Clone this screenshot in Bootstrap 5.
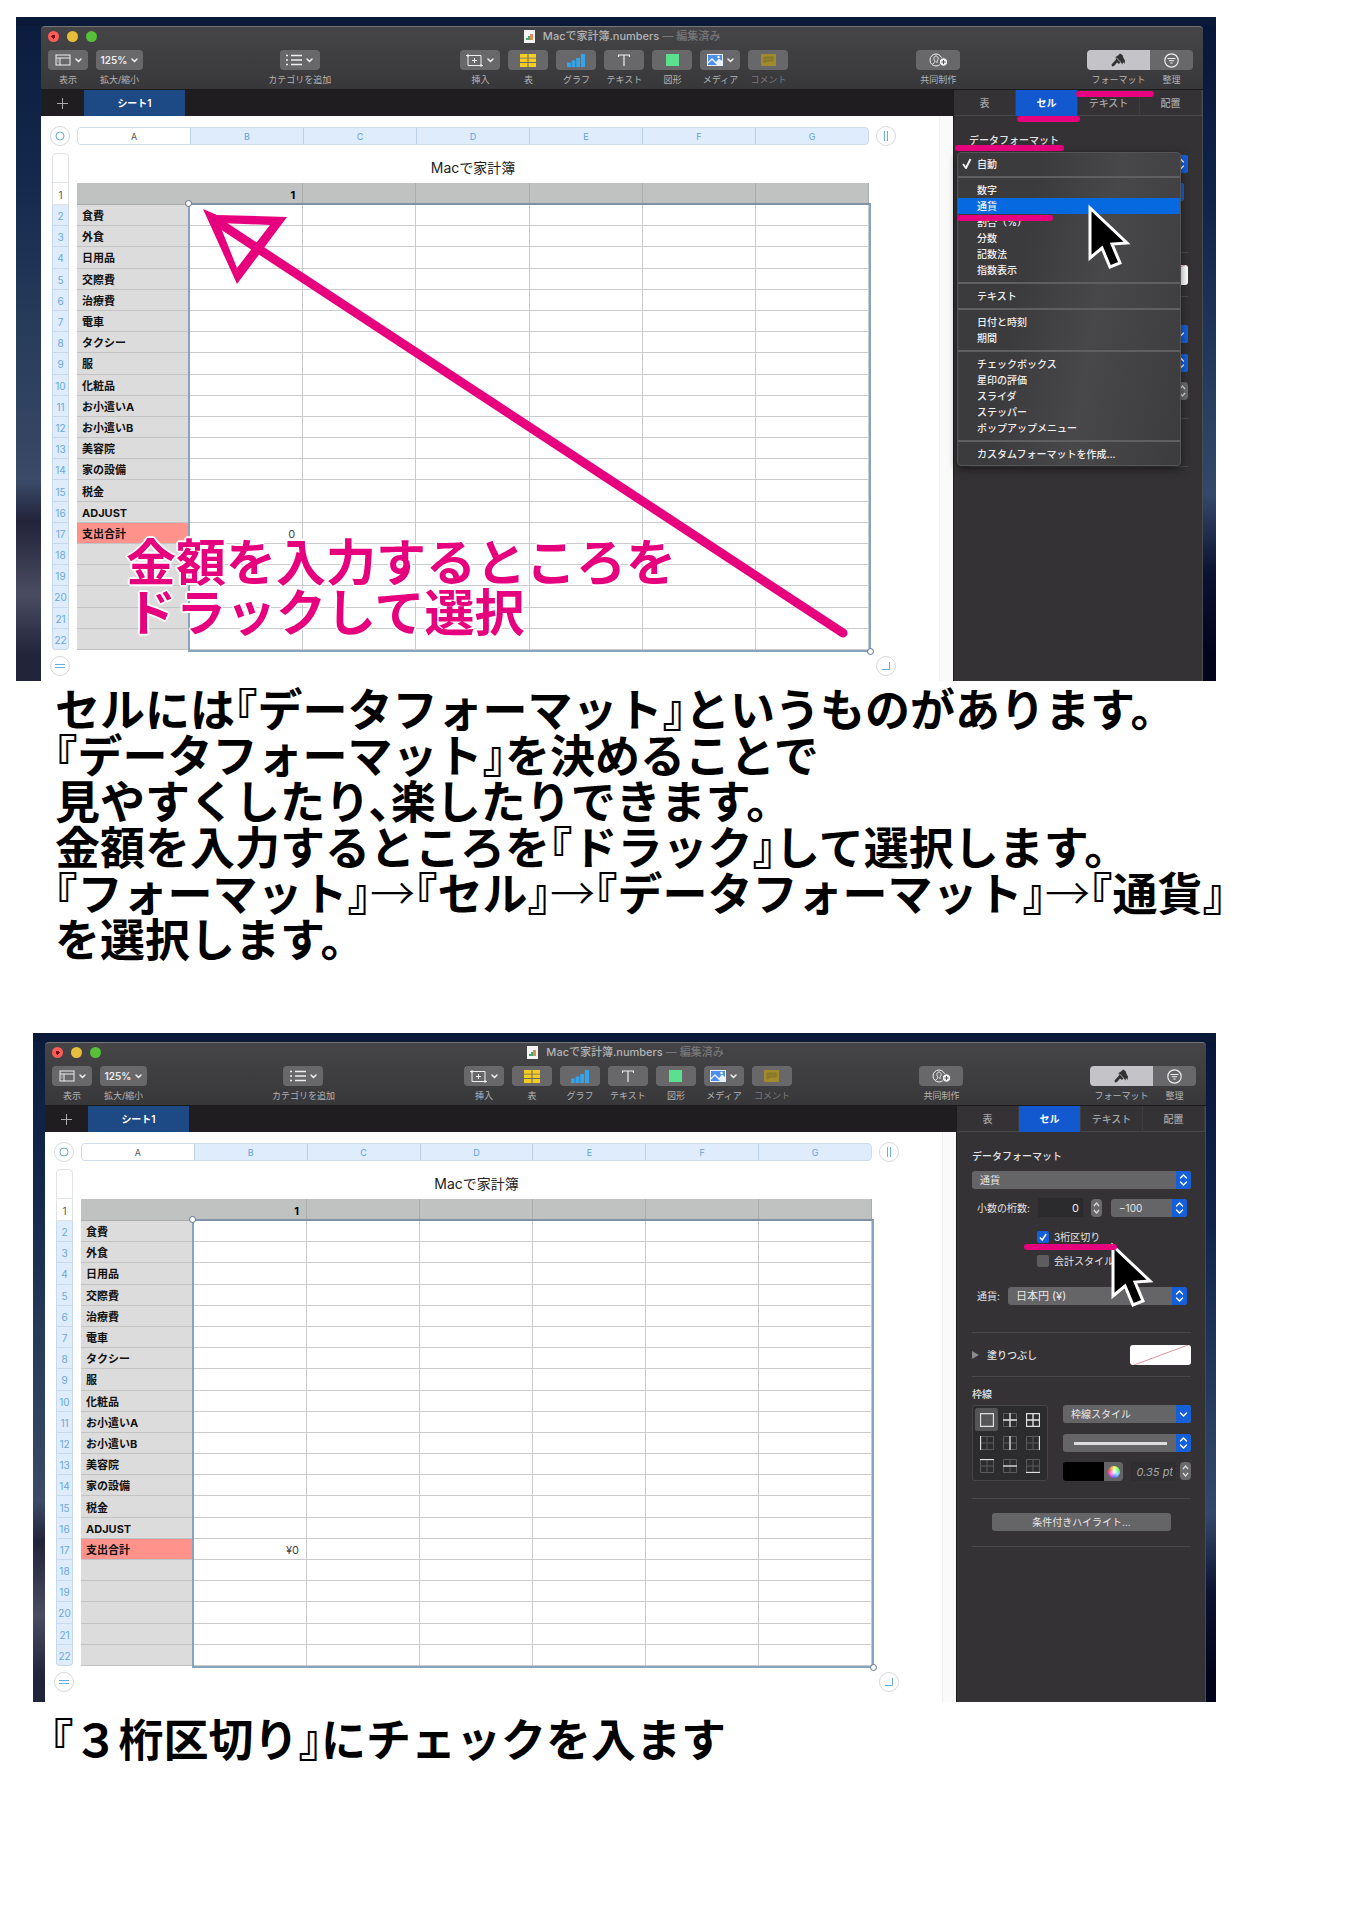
<!DOCTYPE html>
<html lang="ja">
<head>
<meta charset="utf-8">
<meta name="viewport" content="width=device-width, initial-scale=1">
<title>Macで家計簿</title>
<link href="https://cdn.jsdelivr.net/npm/bootstrap@5.3.0/dist/css/bootstrap.min.css" rel="stylesheet">
<style>
:root{--pink:#e6007e;--ui:Inter,"Noto Sans CJK JP",sans-serif}
body{font-family:var(--ui);background:#fff;color:#000}
.sheet-page{max-width:1216px;padding-top:17px}
svg{display:block}
/* desktop wallpaper round each window */
.shot{position:relative;margin-left:16px;padding:9px 13px 0 25px;
  background:
   linear-gradient(#0a1938,#0a1938) top/100% 9px no-repeat,
   linear-gradient(#0b1c3e 0%,#14294c 25%,#263a5a 45%,#3a4a68 70%,#22233a 76%,#4a4c62 87%,#22243c 96%) left/50% 100% no-repeat,
   linear-gradient(#071638 0%,#10244a 28%,#2b4263 62%,#33486a 72%,#0b1130 84%,#02041c 96%) right/50% 100% no-repeat}
.shot-second{margin-left:33px;margin-top:72px;padding:9px 10px 0 12px}
.mac{position:relative}
.chrome-top{height:64px;background:linear-gradient(#454547,#38383a);border-top:1px solid #77777a;border-bottom:1px solid #1b1b1c;border-radius:4px 4px 0 0}
.titlebar{position:relative;height:19px;font-size:11px;line-height:19px;font-weight:500;color:#b4b4b6}
.lights{position:absolute;left:7px;top:4px;gap:8px}
.lights button{width:11px;height:11px;border:0;border-radius:50%;padding:0}
.lt-r{background:radial-gradient(circle,#7a0d0d 0 2px,#fc5b57 2px)}
.lt-y{background:#e5bf3c}.lt-g{background:#57c038}
.dim{color:#77777a}
.tools{padding:4px 10px 0 7px}
.tool{width:40px;flex:none}
.tool-w{width:47px}.tool-c{width:44px}.tool-f{width:63px}.tool-s{width:43px}
.tool button{width:100%;height:20px;border:0;border-radius:4px;background:#68686b;color:#eee;padding:0;gap:4px;font-size:10px;font-weight:600;line-height:20px}
.tool-f button{border-radius:4px 0 0 4px;background:#c3c3c8;color:#333}
.tool-s button{border-radius:0 4px 4px 0}
.tool span{font-size:9px;line-height:19px;white-space:nowrap;color:#b2b2b4}
.tool .dim{color:#77777a}
.sp1{flex:137}.sp2{flex:141}.sp3{flex:128}.sp4{flex:127}
.workrow{background:#fff}
.sheetbar{height:26px;background:#1f1d20}
.sheetbar button{border:0;background:none;color:#aaa;padding:0;width:43px;font-size:10px;font-weight:600;line-height:26px}
.sheetbar .tab-on{width:101px;background:#1d4985;color:#fff}
.canvas-area{padding:10px 57px 5px 9px;background:linear-gradient(#f0f0f1,#f0f0f1) right 13px top 0/1px 100% no-repeat,linear-gradient(#fafafa,#fafafa) right/14px 100% no-repeat #fff}
.shot-second .canvas-area{padding-bottom:10px}
.knob{width:20px;height:20px;border:1px solid #d5d9dc;border-radius:50%;background:#fff;padding:0;color:#67aee0;flex:none}
.letters{height:18px;margin:0 7px;border:1px solid #cfdcea;border-radius:4px;background:#dfecfc;overflow:hidden;font-size:9px;line-height:17px;color:#5ea2dc;text-align:center}
.letters div{flex:1;border-right:1px solid #bccfe4}
.letters div:first-child{background:#fff;color:#555}
.letters div:last-child{border-right:0}
.gridwrap{position:relative;margin:7px 27px 0 2px}
.grid-tbl{width:100%;height:497px;table-layout:fixed;border-collapse:separate;border-spacing:0;font-size:11px;line-height:14px}
.grid-tbl th,.grid-tbl td{padding:2px 5px 0;white-space:nowrap;vertical-align:middle}
.grid-tbl td{padding-right:7px;border-right:1px solid #c9cbcd;border-bottom:1px solid #c9cbcd;text-align:right;color:#444}
.grid-tbl .cap{height:30px;padding:0;border:0;font-size:14px;font-weight:400;text-align:center;color:#222}
.grid-tbl .hd{height:22px}
.grid-tbl .no{padding:2px 0 0;text-align:center;font-size:10px;font-weight:400;color:#6aa9dd;background:#dfecfc;border:1px solid #c8d9ec;border-top:0}
.grid-tbl .no0{background:#fff;border:1px solid #dfe3e6;border-radius:4px 4px 0 0}
.grid-tbl .no1{background:#fff;color:#555;border-color:#dfe3e6}
.grid-tbl tr:last-child .no{border-radius:0 0 4px 4px}
.grid-tbl .hd td,.grid-tbl .hd .name{background:#c0c1c1;border-color:#a9abac;color:#000;font-weight:700}
.grid-tbl .name{background:#dcdcdc;border-bottom:1px solid #c3c3c3;text-align:left;font-weight:700;color:#111}
.grid-tbl .sum .name{background:#ff938b}
.range{position:absolute;left:calc(25px + (100% - 25px)/7 - 2px);top:50px;right:-2px;bottom:-2px;border:2px solid #86a4bd;border-top-color:#8090a8;pointer-events:none}
.range i{position:absolute;width:7px;height:7px;border:1px solid #5d7591;border-radius:50%;background:#fff}
.range i:first-child{left:-5px;top:-5px}.range i:last-child{right:-5px;bottom:-5px}
.foot{padding-top:6px}
/* inspector */
.insp{position:relative;width:250px;flex:none;background:#343234;border-left:1px solid #1c1b1d;border-right:1px solid #4b4b4e;color:#e4e4e6;font-size:10px;line-height:16px}
.insp button,.insp input,.insp select{font-size:10px;color:#e8e8ea;border:0;padding:0}
.insp-tabs{height:26px;border-bottom:1px solid #48474a}
.insp-tabs button{flex:1;background:none;color:#a2a2a4;border-right:1px solid #3e3d40;font-weight:500}
.insp-tabs .on{background:#1259d0;color:#fff;font-weight:700;margin-bottom:-1px}
.insp-body{padding:16px 14px 0 15px}
.strong{font-weight:500}
.pop{position:relative;height:18px;display:block}
.pop select,.pop .linebtn{appearance:none;display:block;width:100%;height:18px;border-radius:3px;background:#656466;padding-left:8px;line-height:18px}
.pop svg{position:absolute;right:0;top:0;pointer-events:none}
.dec{height:19px;margin-top:9px;padding:0 4px 0 5px}
.dec input{width:45px;height:19px;background:#2b2a2c;text-align:right;padding-right:4px;font-size:11px;margin-left:auto}
.dec .pop{width:76px}
.stepper{display:block;width:11px;height:18px;border-radius:4px;background:#6b6a6c;flex:none}
.step-gap{margin:0 9px 0 8px}
.checks{padding:14px 0 0 65px}
.checks div{position:relative;height:12px;margin-bottom:12px}
.checks input{appearance:none;width:12px;height:12px;border-radius:2px;background:#5d5c5e;margin:0 5px 0 0;flex:none}
.checks input:checked{background:#1560d8}
.checks svg{position:absolute;left:0;top:0;pointer-events:none}
.cur{padding:8px 4px 0 5px}
.cur .pop{width:179px}.cur .pop select{font-size:11px}
.rule{height:1px;background:#48474a}
.r1{margin-top:51px}.shot-second .r1{margin-top:27px}
.fillrow{height:43px}
.swatch{width:61px;height:20px;border-radius:3px;background:#fff!important;overflow:hidden}
.bgrid{width:76px;height:76px;border:1px solid #464548;border-radius:3px;background:#2c2b2d;display:grid;grid-template-columns:repeat(3,1fr);padding:2px}
.bgrid button{background:none;display:grid;place-items:center;border-radius:2px}
.bgrid button:first-child{background:#555457}
.bcol{width:128px}
.linebtn{position:relative}
.linebtn:after{content:"";position:absolute;left:11px;right:24px;top:8px;height:3px;background:#dcdcdc}
.well{width:60px;height:19px;border-radius:3px;overflow:hidden;background:#000!important}
.well span{width:19px;height:19px;background:#656466}
.well b{width:12px;height:12px;border-radius:50%;background:radial-gradient(circle,#fff 0,transparent 60%),conic-gradient(#ff6,#6f6,#6cf,#66f,#f4c,#f54,#ff6)}
.bcol input{width:45px;height:19px;background:#2f2e30;color:#a4a4a6;font-style:italic;font-size:11px;text-align:right;padding-right:3px}
.hl{width:179px;height:18px;border-radius:3px;background:#656466!important;margin:14px auto 15px 20px;display:block}
/* format menu */
.fmt-menu{position:absolute;left:3px;top:62px;width:224px;padding:3px 0;margin:0;background:linear-gradient(100deg,#3b3a3d 30%,#48474a 60%,#3c3b3e);border:1px solid #555457;border-radius:4px;box-shadow:0 3px 8px #0008;list-style:none;height:314px}
.fmt-menu button{display:block;width:100%;height:16px;line-height:16px;text-align:left;background:none;padding-left:19px;font-weight:500;color:#f0f0f0;position:relative}
.fmt-menu .pick{background:#0669df}
.fmt-menu hr{margin:4px 0;border:0;height:2px;background:#5f5e61;opacity:1}
.fmt-menu svg{position:absolute;left:4px;top:2px}
.marks{position:absolute;left:0;top:0;width:100%;height:100%;pointer-events:none}
.callout{position:absolute;left:110px;top:521px;margin:0;font-size:50px;line-height:50px;font-weight:700;color:var(--pink);white-space:nowrap;pointer-events:none;
 text-shadow:2px 0 #fff,-2px 0 #fff,0 2px #fff,0 -2px #fff,1px 1px #fff,-1px 1px #fff,1px -1px #fff,-1px -1px #fff}
.explain{font-family:"Noto Sans CJK JP",sans-serif;font-size:45px;line-height:46px;font-weight:700;font-feature-settings:"halt";white-space:nowrap;margin:4px 0 0 55px}
.explain-2{margin:13px 0 0 51px}
.explain span{font-weight:300}
</style>
</head>
<body>
<main class="sheet-page">
  <section class="shot" id="shotA"></section>
  <p class="explain">セルには『データフォーマット』というものがあります。<br>『データフォーマット』を決めることで<br>見やすくしたり、楽したりできます。<br>金額を入力するところを『ドラック』して選択します。<br>『フォーマット』<span>→</span>『セル』<span>→</span>『データフォーマット』<span>→</span>『通貨』<br>を選択します。</p>
  <section class="shot shot-second" id="shotB"></section>
  <p class="explain explain-2">『３桁区切り』にチェックを入ます</p>
</main>
<script>
const svg=(w,h,body)=>`<svg width="${w}" height="${h}" viewBox="0 0 ${w} ${h}" fill="none" stroke="currentColor" aria-hidden="true">${body}</svg>`;
const chev=svg(7,5,'<path d="M1 1l2.500 2.500L6 1" stroke-width="1.500" stroke-linecap="round"/>');
const I={
 view:svg(16,12,'<rect x="1" y="1" width="14" height="10"/><path d="M1 4h14M5 4v7M2.500 6h1M2.500 8h1"/>')+chev,
 zoom:'125%'+chev,
 cat:svg(16,12,'<path d="M5 1.500h11M5 6h11M5 10.500h11M0 1.500h2M0 6h2M0 10.500h2" stroke-width="1.500"/>')+chev,
 insert:svg(17,13,'<path d="M2 1.500h13v10H2zM8.500 4v5M6 6.500h5"/><path d="M0 1.500h4M2 0v3M13 11.500h4M15 10v3"/>')+chev,
 table:svg(16,13,'<path fill="#f3cd22" stroke="none" d="M0 0h7.500v3.700H0zM8.500 0H16v3.700H8.500zM0 4.500h7.500v3.500H0zM8.500 4.500H16v3.500H8.500zM0 9h7.500v4H0zM8.500 9H16v4H8.500z"/>'),
 chart:svg(18,13,'<path fill="#35a3ea" stroke="none" d="M0 8.500h3.800V13H0zM4.600 6.500h3.800V13H4.600zM9.200 4H13v9H9.200zM13.800 0H18v13h-4.200z"/>'),
 text:svg(12,12,'<path d="M.5 3V1h11v2M6 1v11" stroke-width="1.200"/>'),
 shape:svg(13,12,'<rect width="13" height="12" fill="#5de08d" stroke="none"/>'),
 media:svg(16,12,'<rect width="16" height="12" fill="#e9f1fb" stroke="none"/><path fill="#4d8fe8" stroke="none" d="M1 1h14v6l-3-2.500L9 8 5 4 1 8zM1 9.500L5 6l5 5H1z"/><circle cx="11.500" cy="3" r="1.200" fill="#fff" stroke="none"/>')+chev,
 comment:svg(15,12,'<path fill="#a08a2b" stroke="none" d="M0 0h15v12H0z"/><path stroke="#85742a" d="M3 3h9v4H6L3 9z" fill="#8d7a2a"/>'),
 share:svg(19,14,'<circle cx="7" cy="7" r="6"/><path d="M4 11c1-2 2-1 2-3-2-2-1-5 1-5s3 3 1 5v2"/><circle cx="14.500" cy="9" r="4.200" fill="#eee" stroke="#68686b"/><path d="M14.500 7v4M12.500 9h4" stroke="#555"/>'),
 brush:svg(15,14,'<path fill="currentColor" stroke="none" d="M.5 11.500L5 6.500 4.500 4 7 2.500 9 .5l2.500 1.500 1 3 1.500 2.500-.5 3.500-1.500-2-.5 2.500L9.500 9 8 11 6 9.500 3 13l-2 .5z"/><path stroke="#c3c3c8" stroke-width=".8" d="M5 4.500L9.500 9"/>'),
 sort:svg(15,15,'<circle cx="7.500" cy="7.500" r="6.700" stroke-width="1.200"/><path d="M3.500 5.500h8M4.800 7.700h5.400M6.300 10h2.400"/>')
};
const tool=(icon,label,cls='',dim='')=>`<div class="tool ${cls} d-flex flex-column align-items-center"><button class="d-flex align-items-center justify-content-center" aria-label="${label}">${I[icon]}</button><span class="${dim}">${label}</span></div>`;
const blue=(single)=>svg(15,18,`<path d="M0 0h12a3 3 0 0 1 3 3v12a3 3 0 0 1-3 3H0z" fill="#1560d8" stroke="none"/><path stroke="#fff" stroke-width="1.300" stroke-linecap="round" d="${single?'M4.500 8l3 3 3-3':'M4.500 7l3-3 3 3M4.500 11l3 3 3-3'}"/>`);
const pop=(text,label,single)=>`<span class="pop"><select aria-label="${label}"><option>${text}</option></select>${blue(single)}</span>`;
const stepper=`<button class="stepper" aria-label="増減">${svg(11,18,'<path stroke="#ddd" d="M3 7l2.500-3L8 7M3 11l2.500 3L8 11" stroke-width="1.200"/>')}</button>`;
const rows=['','食費','外食','日用品','交際費','治療費','電車','タクシー','服','化粧品','お小遣いA','お小遣いB','美容院','家の設備','税金','ADJUST','支出合計','','','','',''];
const knob=(p,l)=>`<button class="knob d-flex align-items-center justify-content-center" aria-label="${l}">${svg(10,10,p)}</button>`;
const bIcons=['M.5 .5h13v13H.5z','M7 0v14M0 7h14','M.5 .5h13v13H.5zM7 0v14M0 7h14','M.5 0v14','M7 0v14','M13.500 0v14','M0 .5h14','M0 7h14','M0 13.500h14'];

function table(total){
  const body=rows.map((name,i)=>{
    let cells='';
    for(let c=0;c<6;c++) cells+=`<td>${c==0&&i==0?'1':c==0&&i==16?total:''}</td>`;
    return `<tr class="${i==0?'hd':i==16?'sum':''}"><th class="no ${i==0?'no1':''}">${i+1}</th><th></th><th class="name">${name}</th>${cells}</tr>`;
  }).join('');
  return `<table class="grid-tbl"><colgroup><col style="width:17px"><col style="width:8px"><col span="7"></colgroup><tbody><tr><th class="no0"></th><th></th><th class="cap" colspan="7">Macで家計簿</th></tr>${body}</tbody></table>`;
}
function inspector(full){
  const id=full?'b':'a';
  return `<aside class="insp"><div class="insp-tabs d-flex"><button>表</button><button class="on">セル</button><button>テキスト</button><button>配置</button></div>
  <div class="insp-body"><div class="strong">データフォーマット</div><div style="height:7px"></div>${pop(full?'通貨':'自動','データフォーマット')}
  <div class="dec d-flex align-items-center"><label for="dec-${id}">小数の桁数:</label><input id="dec-${id}" value="0"><span class="step-gap">${stepper}</span>${pop('−100','負の数')}</div>
  ${full?`<div class="checks"><div class="d-flex align-items-center"><input type="checkbox" id="sep" checked>${svg(12,12,'<path stroke="#fff" stroke-width="1.500" d="M3 6.500l2.200 2.500L9.200 3"/>')}<label for="sep">3桁区切り</label></div><div class="d-flex align-items-center"><input type="checkbox" id="acct"><label for="acct">会計スタイル</label></div></div>
  <div class="cur d-flex align-items-center justify-content-between"><span>通貨:</span>${pop('日本円 (¥)','通貨')}</div>`:''}
  <div class="rule r1"></div>
  <div class="fillrow d-flex align-items-center"><span class="me-2">${svg(7,8,'<path d="M0 0l7 4-7 4z" fill="#8b8a8c" stroke="none"/>')}</span><span class="strong">塗りつぶし</span><button class="swatch ms-auto" aria-label="塗りつぶし">${svg(61,20,'<path stroke="#d9939b" d="M4 20L58 0"/>')}</button></div>
  <div class="rule"></div><div class="strong" style="margin:9px 0 3px">枠線</div>
  <div class="d-flex justify-content-between"><div class="bgrid">${bIcons.map((d,i)=>`<button aria-label="枠線 ${i+1}">${svg(14,14,`<path stroke="#5b5a5c" d="M.5 .5h13v13H.5zM7 0v14M0 7h14"/><path stroke="#e0e0e0" stroke-width="1.300" d="${d}"/>`)}</button>`).join('')}</div>
   <div class="bcol d-flex flex-column justify-content-between">${pop('枠線スタイル','枠線スタイル',1)}<span class="pop"><button class="linebtn" aria-label="線種"></button>${blue()}</span>
   <div class="d-flex align-items-center justify-content-between"><button class="well d-flex justify-content-end" aria-label="線の色"><span class="d-flex align-items-center justify-content-center"><b></b></span></button><div class="d-flex"><input class="me-1" aria-label="線の太さ" value="0.35 pt">${stepper}</div></div></div></div>
  <div class="rule" style="margin-top:17px"></div><button class="hl">条件付きハイライト...</button><div class="rule"></div></div>${full?'':menu()}</aside>`;
}
function menu(){
  const groups=[['自動'],['数字','通貨','割合（%）','分数','記数法','指数表示'],['テキスト'],['日付と時刻','期間'],['チェックボックス','星印の評価','スライダ','ステッパー','ポップアップメニュー'],['カスタムフォーマットを作成...']];
  const tick=svg(10,11,'<path d="M1 6l3 4L8.500 1" stroke-width="2"/>');
  return `<ul class="fmt-menu">${groups.map(g=>g.map(t=>`<li><button class="${t=='通貨'?'pick':''}">${t=='自動'?tick:''}${t}</button></li>`).join('')).join('<li><hr></li>')}</ul>`;
}
function mac(total,full){
  return `<div class="mac"><header class="chrome-top"><div class="titlebar d-flex justify-content-center align-items-center">
   <div class="lights d-flex"><button class="lt-r" aria-label="閉じる"></button><button class="lt-y" aria-label="しまう"></button><button class="lt-g" aria-label="拡大"></button></div>
   ${svg(11,13,'<path fill="#f4f4f4" stroke="none" d="M0 0h11v13H0z"/><path fill="#3fae6a" stroke="none" d="M2 8h2v2H2zM4 6h2v4H4z"/><path fill="#e08d5a" stroke="none" d="M6 4h3v6H6z"/>')}<span class="ms-2">Macで家計簿.numbers <span class="dim">— 編集済み</span></span></div>
  <div class="tools d-flex">${tool('view','表示')}<div class="me-2"></div>${tool('zoom','拡大/縮小','tool-w')}<div class="sp1"></div>${tool('cat','カテゴリを追加')}<div class="sp2"></div>
  <div class="d-flex gap-2">${tool('insert','挿入')}${tool('table','表')}${tool('chart','グラフ')}${tool('text','テキスト')}${tool('shape','図形')}${tool('media','メディア')}${tool('comment','コメント','','dim')}</div>
  <div class="sp3"></div>${tool('share','共同制作','tool-c')}<div class="sp4"></div>${tool('brush','フォーマット','tool-f')}${tool('sort','整理','tool-s')}</div></header>
  <div class="workrow d-flex"><div class="flex-grow-1"><div class="sheetbar d-flex"><button class="d-flex align-items-center justify-content-center" aria-label="シートを追加">${svg(11,11,'<path d="M5.500 0v11M0 5.500h11"/>')}</button><button class="tab-on">シート1</button></div>
   <div class="canvas-area"><div class="d-flex align-items-center">${knob('<circle cx="5" cy="5" r="4"/>','表を選択')}<div class="letters d-flex flex-grow-1">${[...'ABCDEFG'].map(l=>`<div>${l}</div>`).join('')}</div>${knob('<path d="M3.500 0v10M6.500 0v10"/>','列を追加')}</div>
   <div class="gridwrap">${table(total)}<div class="range"><i></i><i></i></div></div>
   <div class="foot d-flex justify-content-between">${knob('<path d="M0 3.500h10M0 6.500h10"/>','行を追加')}${knob('<path d="M8.500 1v7.500H1"/>','行と列を追加')}</div></div></div>
   ${inspector(full)}</div></div>`;
}
const pointer=(x,y)=>`<path transform="translate(${x} ${y})" d="M0 0V50L12 40L20 59L30 55L22 36L37 35Z" fill="#000" stroke="#fff" stroke-width="3"/>`;
const bar=(x1,x2,y)=>`<path d="M${x1} ${y}H${x2}" stroke="#e6007e" stroke-width="6" stroke-linecap="round"/>`;
document.getElementById('shotA').innerHTML=mac('0',false)+
 `<p class="callout">金額を入力するところを<br>ドラックして選択</p>
 <svg class="marks" viewBox="16 17 1200 664" preserveAspectRatio="xMinYMin" fill="none"><path fill="#e6007e" fill-rule="evenodd" d="M203 209L217 215L287 217L237 284ZM219 223L237 268L270 225Z"/><path d="M216 221L843 633" stroke="#e6007e" stroke-width="9" stroke-linecap="round"/>
 ${bar(1020,1077,119)}${bar(1079,1151,94)}${bar(958,1061,148)}${bar(960,1050,218)}${pointer(1090,208)}</svg>`;
document.getElementById('shotB').innerHTML=mac('¥0',true)+
 `<svg class="marks" viewBox="33 1033 1183 669" preserveAspectRatio="xMinYMin" fill="none">${pointer(1113,1246)}${bar(1027,1114,1247)}</svg>`;
</script>
<script src="https://cdn.jsdelivr.net/npm/bootstrap@5.3.0/dist/js/bootstrap.bundle.min.js"></script>
</body>
</html>
